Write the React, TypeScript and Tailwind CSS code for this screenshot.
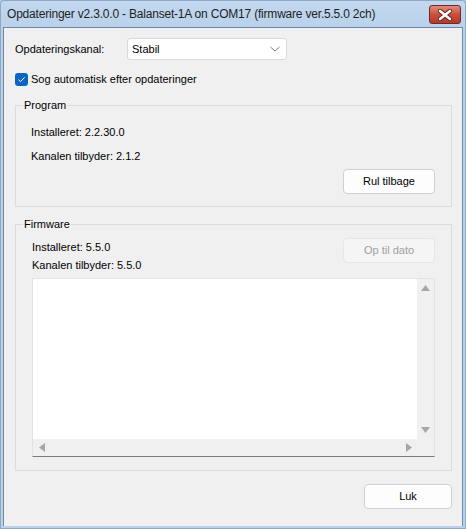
import React from "react";

const UI = { fontFamily: '"Liberation Sans", Arial, sans-serif' };

function Btn({ children, disabled, w }: { children: React.ReactNode; disabled?: boolean; w: string }) {
  return (
    <div
      className={
        disabled
          ? `${w} h-[25px] flex items-center justify-center rounded-[4px] border border-[#e6e6e6] bg-[#f5f5f5] text-[#a0a0a0]`
          : `${w} h-[25px] flex items-center justify-center rounded-[4px] border border-[#d0d0d0] bg-[#fdfdfd] text-black`
      }
    >
      {children}
    </div>
  );
}

function Group({ title, children }: { title: string; children: React.ReactNode }) {
  return (
    <div className="relative border border-[#dcdcdc]">
      <span className="absolute -top-[8px] left-[7px] px-[1px] bg-[#f0f0f0] leading-[14px]">{title}</span>
      {children}
    </div>
  );
}

export default function App() {
  return (
    <div className="w-[466px] h-[529px] flex flex-col bg-[#b9d1ea] text-[11px] text-black" style={UI}>
      {/* title bar */}
      <div className="h-[27px] flex items-start bg-gradient-to-b from-[#c2d8ee] to-[#b9d1ea] border-t border-l border-r border-[#8fa9c3] rounded-t-[4px]">
        <div className="pl-[6px] pt-[4px] text-[12px] leading-[18px] tracking-[-0.2px] text-[#1e1e1e] whitespace-nowrap">
          Opdateringer v2.3.0.0 - Balanset-1A on COM17 (firmware ver.5.5.0 2ch)
        </div>
        <div className="ml-auto mr-[4px] mt-[4px] w-[32px] h-[19px] rounded-[3px] border border-[#6d2a2a] bg-gradient-to-b from-[#e08a7a] via-[#c9503c] to-[#b9372a] flex items-center justify-center">
          <svg width="16" height="12" viewBox="0 0 16 12">
            <path d="M3 2 L13 10 M13 2 L3 10" fill="none" stroke="#5a1c1c" strokeWidth="4.2" strokeLinecap="round" />
            <path d="M3 2 L13 10 M13 2 L3 10" fill="none" stroke="#ffffff" strokeWidth="2.6" strokeLinecap="round" />
          </svg>
        </div>
      </div>
      {/* frame + client */}
      <div className="flex-1 flex flex-col px-[2px] pb-[2px] border-l border-r border-b border-[#8fa9c3]">
        <div className="flex-1 flex flex-col bg-[#f0f0f0] border-l border-t border-r border-[#6f8aa6] pl-[11px] pr-[10px]">
          {/* channel row */}
          <div className="mt-[10px] flex items-center h-[22px]">
            <div className="w-[112px]">Opdateringskanal:</div>
            <div className="w-[160px] h-[22px] flex items-center justify-between bg-white border border-[#d9d9d9] rounded-[3px] pl-[4px] pr-[5px]">
              <span>Stabil</span>
              <svg width="12" height="8" viewBox="0 0 12 8">
                <path d="M1.5 2 L6 6 L10.5 2" fill="none" stroke="#7a7a7a" strokeWidth="1" />
              </svg>
            </div>
          </div>
          {/* checkbox row */}
          <div className="mt-[12px] flex items-center h-[14px]">
            <div className="w-[13px] h-[13px] rounded-[3px] bg-[#0a64c4] flex items-center justify-center">
              <svg width="9" height="7" viewBox="0 0 9 7">
                <path d="M1.5 3.8 L3.5 5.6 L7.6 1.4" fill="none" stroke="#ffffff" strokeWidth="1" />
              </svg>
            </div>
            <span className="ml-[3px] text-[11px]">Sog automatisk efter opdateringer</span>
          </div>
          {/* Program group */}
          <div className="mt-[19px]">
            <Group title="Program">
              <div className="pl-[15px] pr-[16px] pt-[17px] pb-[12px] flex flex-col">
                <div className="h-[18px] leading-[18px]">Installeret: 2.2.30.0</div>
                <div className="mt-[6px] h-[18px] leading-[18px]">Kanalen tilbyder: 2.1.2</div>
                <div className="mt-[4px] flex justify-end">
                  <Btn w="w-[92px]">Rul tilbage</Btn>
                </div>
              </div>
            </Group>
          </div>
          {/* Firmware group */}
          <div className="mt-[17px]">
            <Group title="Firmware">
              <div className="pl-[16px] pr-[16px] pt-[13px] pb-[13px] flex flex-col">
                <div className="flex items-start">
                  <div className="flex-1">
                    <div className="h-[18px] leading-[18px]">Installeret: 5.5.0</div>
                    <div className="h-[18px] leading-[18px]">Kanalen tilbyder: 5.5.0</div>
                  </div>
                  <Btn w="w-[92px]" disabled>
                    Op til dato
                  </Btn>
                </div>
                {/* text area */}
                <div className="mt-[4px] h-[179px] flex flex-col bg-white border-l border-t border-r border-[#e3e3e3] border-b border-b-[#7a7a7a]">
                  <div className="flex-1 flex">
                    <div className="flex-1 bg-white" />
                    <div className="w-[17px] bg-[#f0f0f0] flex flex-col items-center justify-between pt-[6px] pb-[6px]">
                      <svg width="9" height="6" viewBox="0 0 9 6">
                        <path d="M4.5 0 L9 6 L0 6 Z" fill="#a6a6a6" />
                      </svg>
                      <svg width="9" height="6" viewBox="0 0 9 6">
                        <path d="M0 0 L9 0 L4.5 6 Z" fill="#a6a6a6" />
                      </svg>
                    </div>
                  </div>
                  <div className="h-[17px] flex bg-[#f0f0f0]">
                    <div className="flex-1 flex items-center justify-between pl-[6px] pr-[5px]">
                      <svg width="6" height="9" viewBox="0 0 6 9">
                        <path d="M6 0 L6 9 L0 4.5 Z" fill="#a6a6a6" />
                      </svg>
                      <svg width="6" height="9" viewBox="0 0 6 9">
                        <path d="M0 0 L6 4.5 L0 9 Z" fill="#a6a6a6" />
                      </svg>
                    </div>
                    <div className="w-[17px]" />
                  </div>
                </div>
              </div>
            </Group>
          </div>
          {/* bottom buttons */}
          <div className="mt-[13px] flex justify-end">
            <Btn w="w-[88px]">Luk</Btn>
          </div>
        </div>
      </div>
    </div>
  );
}
